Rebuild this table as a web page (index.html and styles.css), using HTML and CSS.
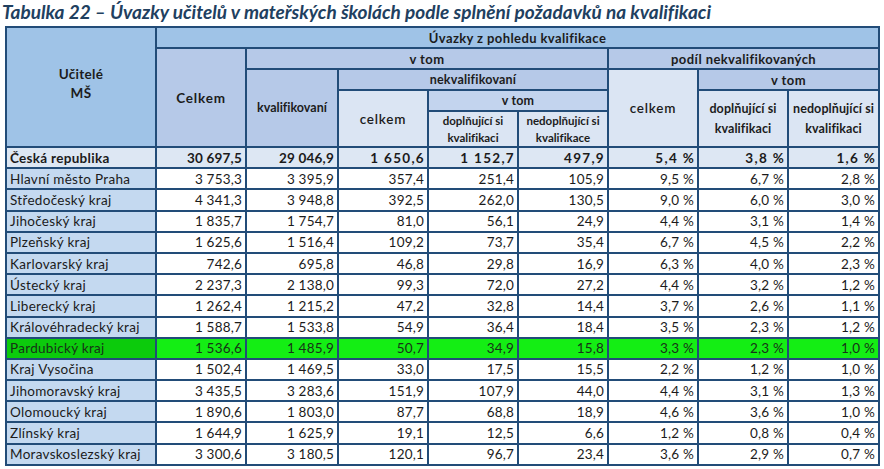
FILE: index.html
```html
<!DOCTYPE html>
<html lang="cs">
<head>
<meta charset="utf-8">
<title>Tabulka 22</title>
<link rel="stylesheet" href="styles.css">
</head>
<body>
<h1 class="title">Tabulka 22 – Úvazky učitelů v mateřských školách podle splnění požadavků na kvalifikaci</h1>
<table class="tbl">
<colgroup>
<col class="c-name"><col class="c-a"><col class="c-b"><col class="c-c"><col class="c-d"><col class="c-e"><col class="c-f"><col class="c-g"><col class="c-h">
</colgroup>
<thead>
<tr class="h1">
<th rowspan="5" class="bg1 name-h">Učitelé<br>MŠ</th>
<th colspan="8" class="bg1 big">Úvazky z pohledu kvalifikace</th>
</tr>
<tr class="h2">
<th rowspan="4" class="bg2 big wide">Celkem</th>
<th colspan="4" class="bg2 big">v tom</th>
<th colspan="3" class="bg2 big">podíl nekvalifikovaných</th>
</tr>
<tr class="h3">
<th rowspan="3" class="bg2 kval">kvalifikovaní</th>
<th colspan="3" class="bg2 mid">nekvalifikovaní</th>
<th rowspan="3" class="bg3 norm">celkem</th>
<th colspan="2" class="bg2 big">v tom</th>
</tr>
<tr class="h4">
<th rowspan="2" class="bg3 norm">celkem</th>
<th colspan="2" class="bg2b mid">v tom</th>
<th rowspan="2" class="bg3 small bigsmall">doplňující si kvalifikaci</th>
<th rowspan="2" class="bg3 small bigsmall">nedoplňující si kvalifikaci</th>
</tr>
<tr class="h5">
<th class="bg3 small">doplňující si kvalifikaci</th>
<th class="bg3 small">nedoplňující si kvalifikace</th>
</tr>
</thead>
<tbody>
<tr class="total"><td>Česká republika</td><td>30 697,5</td><td>29 046,9</td><td class="wide">1 650,6</td><td class="wide">1 152,7</td><td class="wide">497,9</td><td class="wide">5,4 %</td><td class="wide">3,8 %</td><td class="wide">1,6 %</td></tr>
<tr><td>Hlavní město Praha</td><td>3 753,3</td><td>3 395,9</td><td>357,4</td><td>251,4</td><td>105,9</td><td>9,5 %</td><td>6,7 %</td><td>2,8 %</td></tr>
<tr><td>Středočeský kraj</td><td>4 341,3</td><td>3 948,8</td><td>392,5</td><td>262,0</td><td>130,5</td><td>9,0 %</td><td>6,0 %</td><td>3,0 %</td></tr>
<tr><td>Jihočeský kraj</td><td>1 835,7</td><td>1 754,7</td><td>81,0</td><td>56,1</td><td>24,9</td><td>4,4 %</td><td>3,1 %</td><td>1,4 %</td></tr>
<tr><td>Plzeňský kraj</td><td>1 625,6</td><td>1 516,4</td><td>109,2</td><td>73,7</td><td>35,4</td><td>6,7 %</td><td>4,5 %</td><td>2,2 %</td></tr>
<tr><td>Karlovarský kraj</td><td>742,6</td><td>695,8</td><td>46,8</td><td>29,8</td><td>16,9</td><td>6,3 %</td><td>4,0 %</td><td>2,3 %</td></tr>
<tr><td>Ústecký kraj</td><td>2 237,3</td><td>2 138,0</td><td>99,3</td><td>72,0</td><td>27,2</td><td>4,4 %</td><td>3,2 %</td><td>1,2 %</td></tr>
<tr><td>Liberecký kraj</td><td>1 262,4</td><td>1 215,2</td><td>47,2</td><td>32,8</td><td>14,4</td><td>3,7 %</td><td>2,6 %</td><td>1,1 %</td></tr>
<tr><td>Královéhradecký kraj</td><td>1 588,7</td><td>1 533,8</td><td>54,9</td><td>36,4</td><td>18,4</td><td>3,5 %</td><td>2,3 %</td><td>1,2 %</td></tr>
<tr class="hl"><td>Pardubický kraj</td><td>1 536,6</td><td>1 485,9</td><td>50,7</td><td>34,9</td><td>15,8</td><td>3,3 %</td><td>2,3 %</td><td>1,0 %</td></tr>
<tr><td>Kraj Vysočina</td><td>1 502,4</td><td>1 469,5</td><td>33,0</td><td>17,5</td><td>15,5</td><td>2,2 %</td><td>1,2 %</td><td>1,0 %</td></tr>
<tr><td>Jihomoravský kraj</td><td>3 435,5</td><td>3 283,6</td><td>151,9</td><td>107,9</td><td>44,0</td><td>4,4 %</td><td>3,1 %</td><td>1,3 %</td></tr>
<tr><td>Olomoucký kraj</td><td>1 890,6</td><td>1 803,0</td><td>87,7</td><td>68,8</td><td>18,9</td><td>4,6 %</td><td>3,6 %</td><td>1,0 %</td></tr>
<tr><td>Zlínský kraj</td><td>1 644,9</td><td>1 625,9</td><td>19,1</td><td>12,5</td><td>6,6</td><td>1,2 %</td><td>0,8 %</td><td>0,4 %</td></tr>
<tr><td>Moravskoslezský kraj</td><td>3 300,6</td><td>3 180,5</td><td>120,1</td><td>96,7</td><td>23,4</td><td>3,6 %</td><td>2,9 %</td><td>0,7 %</td></tr>
</tbody>
</table>
</body>
</html>
```
FILE: styles.css
```css
html, body {
  margin: 0;
  padding: 0;
  background: #ffffff;
}
body {
  padding: 0 4px 0 5px;
  font-family: Lato, "Liberation Sans", sans-serif;
  font-variant-ligatures: none;
  color: #1b1b1b;
}
.title {
  margin: 0;
  padding: 0;
  height: 26px;
  box-sizing: border-box;
  font-size: 19px;
  line-height: 23px;
  font-weight: 700;
  font-style: italic;
  color: #21405f;
  margin-left: -3px;
  white-space: nowrap;
}
.tbl {
  border-collapse: collapse;
  table-layout: fixed;
  width: 874px;
}
.c-name { width: 150px; }
.c-a { width: 90px; }
.c-b { width: 92px; }
.c-c { width: 90px; }
.c-d { width: 90px; }
.c-e { width: 90px; }
.c-f { width: 90px; }
.c-g { width: 90px; }
.c-h { width: 91px; }
.tbl th, .tbl td {
  border: 2px solid #224c78;
  padding: 0;
  overflow: hidden;
  white-space: nowrap;
}
.tbl th {
  font-size: 12px;
  font-weight: 700;
  line-height: 14px;
  text-align: center;
  color: #1c1c1c;
}
.h1 th, .h2 th, .h3 th, .h4 th { height: 19px; }
.h5 th { height: 33px; }
.tbl th.name-h { font-size: 13.5px; line-height: 19px; padding-bottom: 6px; letter-spacing: 0.3px; }
.tbl th.big { font-size: 13px; letter-spacing: 0.4px; }
.tbl th.wide { font-size: 13.5px; letter-spacing: 0.8px; }
.tbl th.mid { font-size: 12.5px; letter-spacing: 0.2px; }
.tbl th.kval { font-size: 12.5px; }
.tbl th.norm { font-size: 13.5px; font-weight: 600; letter-spacing: 0.8px; }
.tbl th.small { white-space: normal; line-height: 17px; font-size: 11.5px; }
.tbl th.bigsmall { font-size: 12.5px; line-height: 20px; letter-spacing: 0.1px; }
.bg1 { background: #9fc3e7; }
.bg2 { background: #b6c9e8; }
.bg2b { background: #c3d4ee; }
.bg3 { background: #dbe5f3; }

.tbl td {
  height: 19.2px;
  font-size: 13.5px;
  line-height: 18px;
  text-align: right;
  padding-right: 3px;
  background: #ffffff;
  letter-spacing: 0.2px;
}
.tbl td:first-child {
  text-align: left;
  padding-left: 3px;
  padding-right: 0;
  background: #c4d9f0;
  letter-spacing: 0.3px;
}
.tbl tr.total td {
  background: #dde7f3;
  font-weight: 700;
}
.tbl tr.total td.wide { letter-spacing: 1.3px; padding-right: 2px; }
.tbl tr.hl td {
  background: #14ee14;
  color: #173317;
}
.tbl tr.hl td:first-child {
  background: #0ccb0c;
}
```
